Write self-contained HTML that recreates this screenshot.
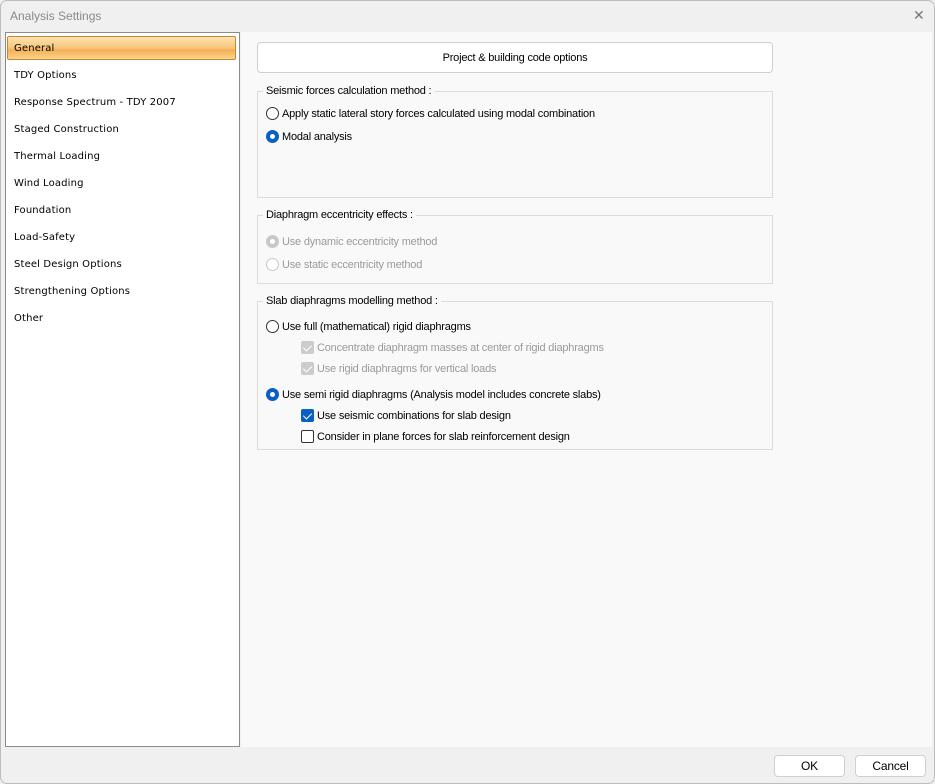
<!DOCTYPE html>
<html><head><style>
body{margin:0;width:935px;height:784px;background:#f0f0f0;font-family:"Liberation Sans",sans-serif;font-size:11px;letter-spacing:-0.2px;color:#000;position:relative;overflow:hidden}
.win{position:absolute;left:0;top:0;width:933px;height:782px;border:1px solid #bdbdbd;border-radius:7px}
.title{position:absolute;left:10px;top:9px;font-size:12px;letter-spacing:0;color:#8a8a8a}
.close{position:absolute;left:913px;top:7px;font-size:14px;color:#777}
.left{position:absolute;left:5px;top:32px;width:233px;height:713px;background:#fff;border:1px solid #8c8c8c}
.item{position:absolute;left:8px;font-family:"DejaVu Sans",sans-serif;font-size:10px;letter-spacing:0.15px}
.sel{position:absolute;left:1px;top:3px;width:229px;height:24px;border:1px solid #c58a2f;border-radius:2px;box-sizing:border-box;background:linear-gradient(#fde4b3,#f8c57a 50%,#f5b055 60%,#fbd38f)}
.right{position:absolute;left:241px;top:32px;width:691px;height:715px;background:#f9f9f9}
.btn{position:absolute;background:#fff;border:1px solid #d0d0d0;border-radius:4px;text-align:center;box-sizing:border-box}
.grp{position:absolute;left:257px;width:516px;border:1px solid #dcdcdc;box-sizing:border-box}
.lg{position:absolute;left:5px;top:-7px;background:#f9f9f9;padding:0 3px}
.row{position:absolute;white-space:nowrap}
.r{display:inline-block;width:13px;height:13px;border:1px solid #333;border-radius:50%;background:#fff;vertical-align:-3px;margin-right:3px;box-sizing:border-box}
.r.on{border:4px solid #0a5fc2}
.r.dis{border-color:#c8c8c8}
.r.dison{border:4px solid #c8c8c8}
.c{display:inline-block;width:13px;height:13px;border:1px solid #333;border-radius:2px;background:#fff;vertical-align:-3px;margin-right:3px;box-sizing:border-box;position:relative}
.c.on{background:#0a5fc2;border-color:#0a5fc2}
.c.dis{background:#ccc;border-color:#ccc}
.c.on:after,.c.dis:after{content:"";position:absolute;left:3px;top:1px;width:4px;height:7px;border:solid #fff;border-width:0 1.5px 1.5px 0;transform:rotate(45deg)}
.g{color:#9a9a9a}
</style></head><body>
<div class="win"></div>
<div class="title">Analysis Settings</div>
<div class="close">✕</div>
<div class="left">
<div class="sel"></div>
<div class="item" style="top:10px">General</div>
<div class="item" style="top:37px">TDY Options</div>
<div class="item" style="top:64px">Response Spectrum - TDY 2007</div>
<div class="item" style="top:91px">Staged Construction</div>
<div class="item" style="top:118px">Thermal Loading</div>
<div class="item" style="top:145px">Wind Loading</div>
<div class="item" style="top:172px">Foundation</div>
<div class="item" style="top:199px">Load-Safety</div>
<div class="item" style="top:226px">Steel Design Options</div>
<div class="item" style="top:253px">Strengthening Options</div>
<div class="item" style="top:280px">Other</div>
</div>
<div class="right"></div>
<div class="btn" style="left:257px;top:42px;width:516px;height:31px;line-height:30px">Project &amp; building code options</div>
<div class="grp" style="top:91px;height:107px"><div class="lg">Seismic forces calculation method :</div></div>
<div class="row" style="left:266px;top:107px"><span class="r"></span>Apply static lateral story forces calculated using modal combination</div>
<div class="row" style="left:266px;top:130px"><span class="r on"></span>Modal analysis</div>
<div class="grp" style="top:215px;height:69px"><div class="lg">Diaphragm eccentricity effects :</div></div>
<div class="row g" style="left:266px;top:235px"><span class="r dison"></span>Use dynamic eccentricity method</div>
<div class="row g" style="left:266px;top:258px"><span class="r dis"></span>Use static eccentricity method</div>
<div class="grp" style="top:301px;height:149px"><div class="lg">Slab diaphragms modelling method :</div></div>
<div class="row" style="left:266px;top:320px"><span class="r"></span>Use full (mathematical) rigid diaphragms</div>
<div class="row g" style="left:301px;top:341px"><span class="c dis"></span>Concentrate diaphragm masses at center of rigid diaphragms</div>
<div class="row g" style="left:301px;top:362px"><span class="c dis"></span>Use rigid diaphragms for vertical loads</div>
<div class="row" style="left:266px;top:388px"><span class="r on"></span>Use semi rigid diaphragms (Analysis model includes concrete slabs)</div>
<div class="row" style="left:301px;top:409px"><span class="c on"></span>Use seismic combinations for slab design</div>
<div class="row" style="left:301px;top:430px"><span class="c"></span>Consider in plane forces for slab reinforcement design</div>
<div class="btn" style="left:774px;top:755px;width:71px;height:22px;line-height:21px;font-size:12px">OK</div>
<div class="btn" style="left:855px;top:755px;width:71px;height:22px;line-height:21px;font-size:12px">Cancel</div>
</body></html>
